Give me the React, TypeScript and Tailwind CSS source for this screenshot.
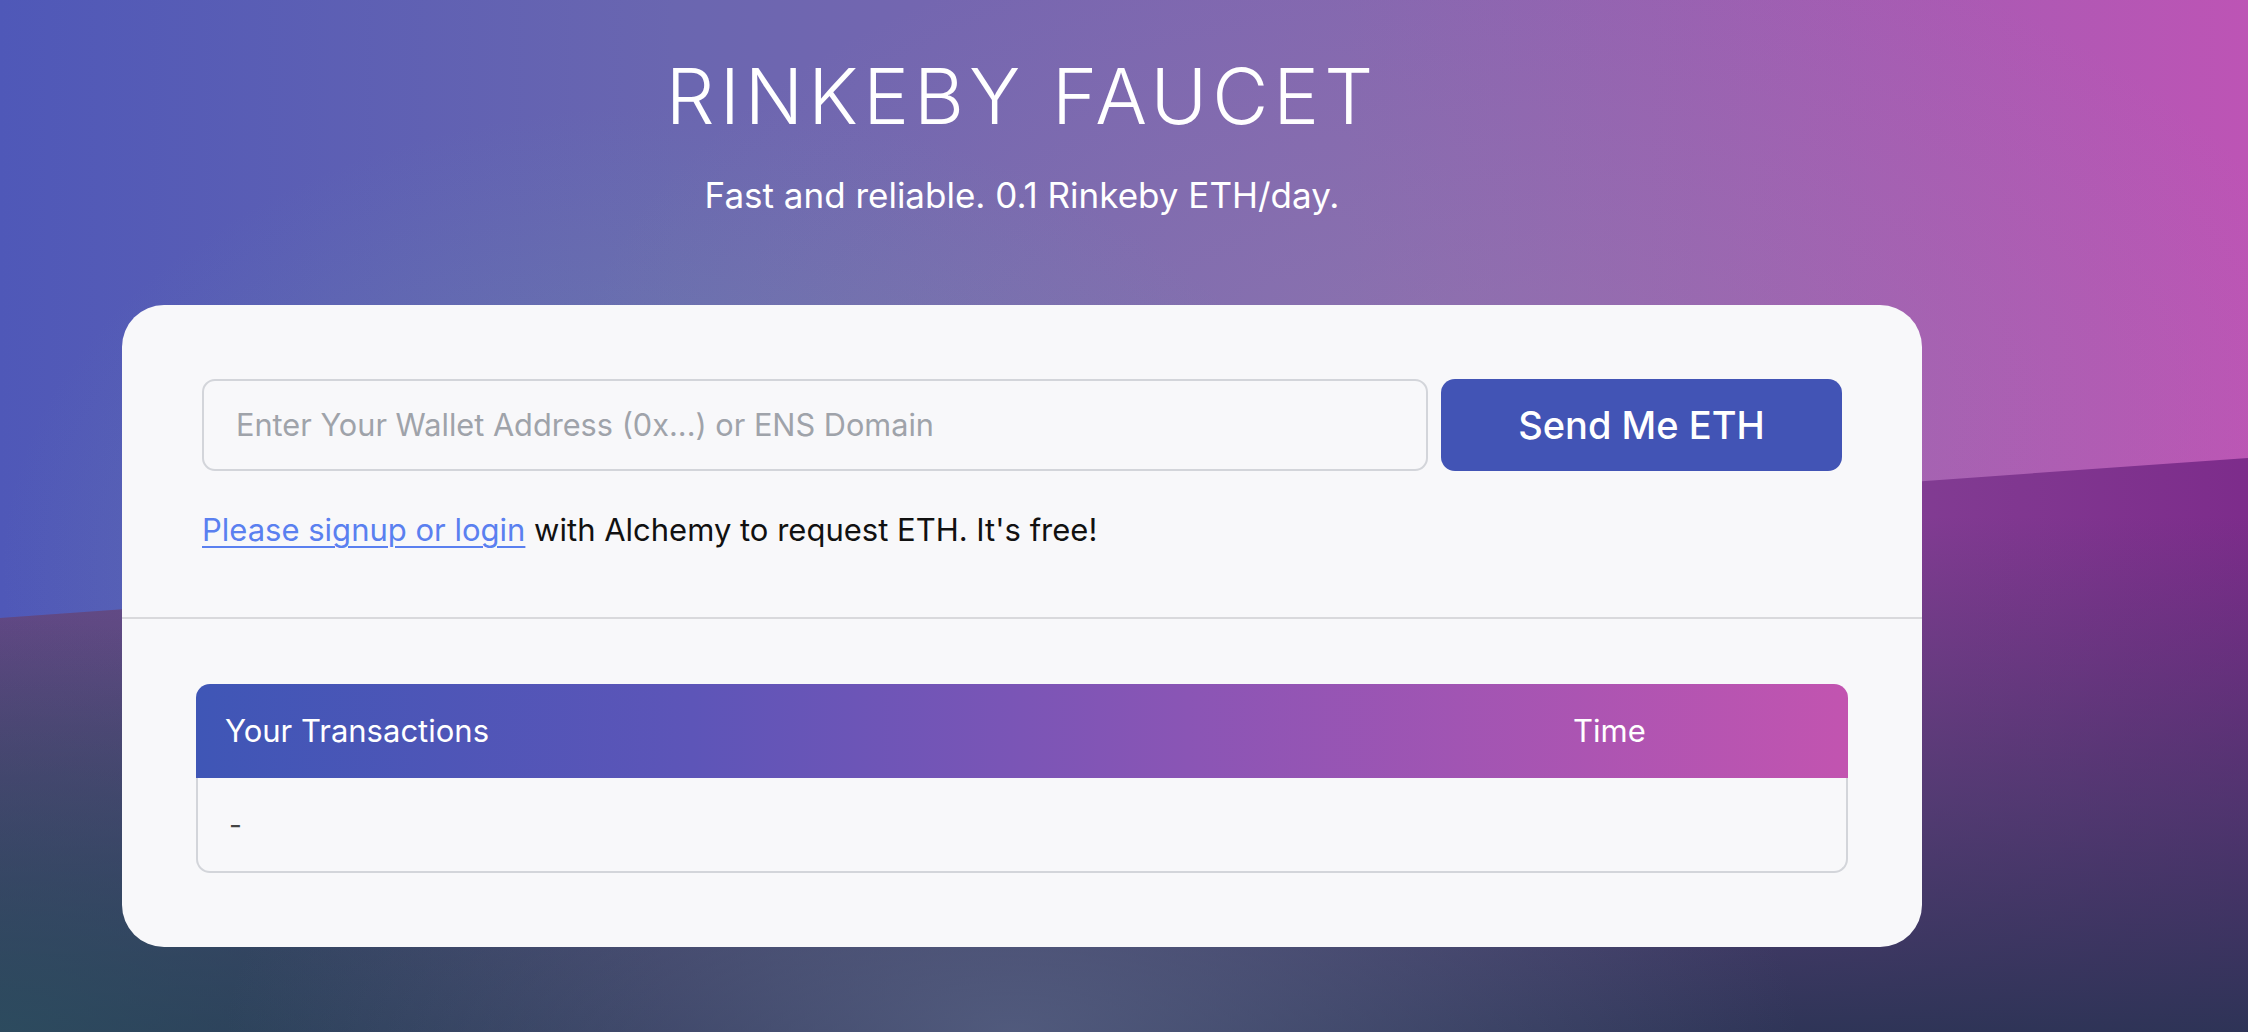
import React from "react";

export default function App() {
  return (
    <div className="relative h-[1032px] w-full overflow-hidden font-['Inter',_'Noto_Sans',_sans-serif]">
      {/* background layers */}
      <div className="absolute inset-0 bg-[radial-gradient(ellipse_30%_45%_at_30%_55%,rgba(110,150,170,0.45),transparent),radial-gradient(ellipse_40%_50%_at_65%_40%,rgba(150,140,170,0.35),transparent),linear-gradient(90deg,#4f58b8_0%,#6a66b0_30%,#8466b0_60%,#bd54b5_100%)]" />
      <div className="absolute inset-0 [clip-path:polygon(0_618px,100%_458px,100%_100%,0_100%)] bg-[radial-gradient(ellipse_35%_35%_at_45%_100%,rgba(95,105,140,0.7),transparent),radial-gradient(ellipse_30%_40%_at_0%_100%,rgba(44,80,96,0.8),transparent),linear-gradient(180deg,rgba(44,58,88,0)_0%,rgba(44,58,88,0)_50%,rgba(44,58,88,0.55)_78%,rgba(42,52,84,0.95)_100%),linear-gradient(90deg,#6c4b8e_0%,#735c90_35%,#864c9a_70%,#7d2c8b_100%)]" />

      <div className="relative ml-[122px] flex w-[1800px] flex-col items-center">
        <h1 className="mt-[58px] text-[77px] font-light leading-none tracking-[0.065em] text-white">
          RINKEBY FAUCET
        </h1>
        <p className="mt-[43px] text-[35px] leading-none text-white">
          Fast and reliable. 0.1 Rinkeby ETH/day.
        </p>

        <div className="mt-[92px] w-full rounded-[42px] bg-[#f8f8fa]">
          <div className="px-[80px] pt-[74px] pb-[0px] h-[312px]">
            <div className="flex gap-[13px]">
              <div className="flex h-[92px] flex-1 items-center rounded-[13px] border-2 border-[#d3d5da] px-[32px] text-[30.7px] text-[#9fa3aa]">
                Enter Your Wallet Address (0x...) or ENS Domain
              </div>
              <button className="h-[92px] w-[401px] rounded-[14px] bg-[#4254b5] text-[38px] font-medium text-white">
                Send Me ETH
              </button>
            </div>
            <p className="mt-[36px] text-[31px] text-[#111]">
              <span className="text-[#5a80f0] underline underline-offset-[5px] decoration-2">Please signup or login</span> with Alchemy to request ETH. It's free!
            </p>
          </div>
          <div className="h-[2px] w-full bg-[#d9d9dc]" />
          <div className="px-[74px] pt-[65px] pb-[74px]">
            <div className="w-full">
              <div className="grid h-[94px] grid-cols-[1348px_1fr] items-center rounded-t-[14px] bg-[linear-gradient(90deg,#3f56b6_0%,#5d55b8_30%,#8a55b5_60%,#c254b0_100%)] px-[29px] text-[31px] text-white">
                <span>Your Transactions</span>
                <span>Time</span>
              </div>
              <div className="flex h-[95px] items-center rounded-b-[14px] border-2 border-t-0 border-[#d3d5da] px-[31px] text-[28px] text-[#444]">
                -
              </div>
            </div>
          </div>
        </div>
      </div>
    </div>
  );
}
